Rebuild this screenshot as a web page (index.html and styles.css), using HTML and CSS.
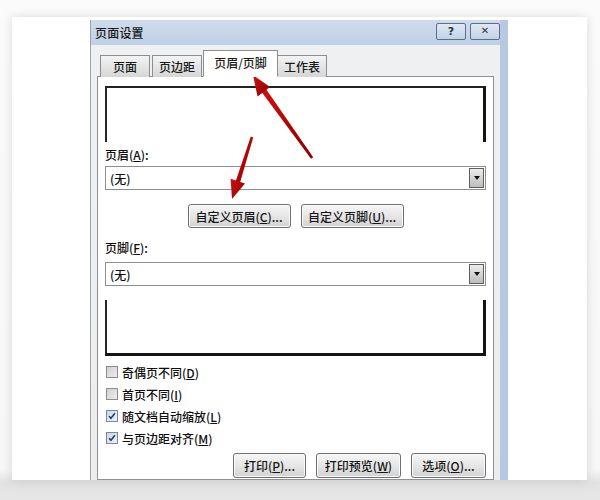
FILE: index.html
```html
<!DOCTYPE html>
<html lang="zh-CN">
<head>
<meta charset="utf-8">
<title>页面设置</title>
<link rel="stylesheet" href="styles.css">
</head>
<body>
<div class="page">
  <div class="card">
    <div class="dialog">
      <div class="titlebar">
        <span class="title">页面设置</span>
        <div class="tbtns">
          <span class="tbtn">?</span>
          <span class="tbtn close">✕</span>
        </div>
      </div>
      <div class="frame">
        <div class="tabs">
          <span class="tab t1">页面</span>
          <span class="tab t2">页边距</span>
          <span class="tab active">页眉/页脚</span>
          <span class="tab t4">工作表</span>
        </div>
        <div class="panel">
          <div class="preview top"></div>
          <div class="label l1">页眉(<u>A</u>):</div>
          <div class="select s1"><span class="val">(无)</span><span class="drop"><span class="tri"></span></span></div>
          <div class="btnrow">
            <span class="btn wide"><span>自定义页眉(<u>C</u>)...</span></span>
            <span class="btn wide"><span>自定义页脚(<u>U</u>)...</span></span>
          </div>
          <div class="label l2">页脚(<u>F</u>):</div>
          <div class="select s2"><span class="val">(无)</span><span class="drop"><span class="tri"></span></span></div>
          <div class="preview bottom"></div>
          <div class="checks">
            <label class="check"><span class="box"></span><span class="ct">奇偶页不同(<u>D</u>)</span></label>
            <label class="check"><span class="box"></span><span class="ct">首页不同(<u>I</u>)</span></label>
            <label class="check"><span class="box on"><svg viewBox="0 0 12 12" width="12" height="12"><path d="M2.5 6.2 L4.8 8.8 L9.5 2.8" fill="none" stroke="#1d3a6e" stroke-width="1.8"/></svg></span><span class="ct">随文档自动缩放(<u>L</u>)</span></label>
            <label class="check"><span class="box on"><svg viewBox="0 0 12 12" width="12" height="12"><path d="M2.5 6.2 L4.8 8.8 L9.5 2.8" fill="none" stroke="#1d3a6e" stroke-width="1.8"/></svg></span><span class="ct">与页边距对齐(<u>M</u>)</span></label>
          </div>
          <div class="footbtns">
            <span class="btn b1"><span>打印(<u>P</u>)...</span></span>
            <span class="btn b2"><span>打印预览(<u>W</u>)</span></span>
            <span class="btn b3"><span>选项(<u>O</u>)...</span></span>
          </div>
        </div>
      </div>
    </div>
  </div>
  <svg class="arrows" width="600" height="500" viewBox="0 0 600 500">
    <defs>
      <linearGradient id="ag" x1="0" y1="0" x2="1" y2="1">
        <stop offset="0" stop-color="#d01010"/>
        <stop offset="1" stop-color="#8a0000"/>
      </linearGradient>
    </defs>
    <polygon points="313.2,157.2 311,158.8 261.8,92.2 266,89" fill="url(#ag)"/>
    <polygon points="253,75 270,87 257.5,96.5" fill="url(#ag)"/>
    <polygon points="253.2,137.4 250.8,136.6 235.6,181.4 240,182.8" fill="url(#ag)"/>
    <polygon points="232,199 245,183.5 230.6,178.8" fill="url(#ag)"/>
  </svg>
</div>
</body>
</html>
```

FILE: styles.css
```css
html, body {
  margin: 0;
  padding: 0;
}
body {
  width: 600px;
  height: 500px;
  overflow: hidden;
  background: linear-gradient(180deg, #fbfbfb 0, #f7f7f7 470px, #e2e2e2 482px, #e6e6e6 500px);
  font-family: "Noto Sans CJK SC", "Noto Sans", sans-serif;
  font-size: 12px;
  font-weight: 500;
  color: #0d0d0d;
}
.page {
  position: relative;
  width: 600px;
  height: 500px;
  padding-top: 17px;
  box-sizing: border-box;
}
.card {
  margin-left: 12px;
  width: 575px;
  height: 463px;
  background: #ffffff;
  box-shadow: 0 0 10px rgba(0, 0, 0, 0.13);
  padding: 3px 0 0 78px;
  box-sizing: border-box;
}
.dialog {
  width: 418px;
  height: 460px;
  overflow: hidden;
  border-left: 1px solid #9da3ab;
  border-right: 8px solid #b7c8e0;
  box-sizing: border-box;
  display: flex;
  flex-direction: column;
  background: #ebebeb;
}
.titlebar {
  height: 25px;
  flex: none;
  display: flex;
  align-items: center;
  justify-content: space-between;
  background: linear-gradient(180deg, #cfdcec, #bfcfe4);
  padding-left: 4px;
  margin-right: -8px;
}
.title {
  font-size: 12px;
  color: #1b1b1b;
  letter-spacing: 0.2px;
}
.tbtns {
  display: flex;
  gap: 4px;
  margin-right: 8px;
  margin-top: -3px;
}
.tbtn {
  width: 28px;
  height: 15px;
  border: 1px solid #5d6f88;
  border-radius: 2px;
  background: linear-gradient(180deg, #dfe8f3, #c3d2e5);
  display: flex;
  align-items: center;
  justify-content: center;
  font-family: "DejaVu Sans", sans-serif;
  font-size: 11px;
  font-weight: bold;
  color: #2b3440;
  line-height: 1;
}
.tbtn.close {
  font-size: 10px;
}
.frame {
  flex: 1;
  display: flex;
  flex-direction: column;
  padding: 5px 6px 0 6px;
  background: linear-gradient(180deg, #eef0f2, #ededed);
}
.tabs {
  display: flex;
  align-items: flex-end;
  height: 27px;
  padding-left: 3px;
  margin-bottom: -1px;
  position: relative;
  z-index: 1;
}
.tab {
  height: 22px;
  box-sizing: border-box;
  border: 1px solid #8b8d90;
  border-bottom: none;
  background: linear-gradient(180deg, #f4f4f4, #d6d6d6);
  display: flex;
  align-items: center;
  justify-content: center;
  font-size: 12px;
  color: #1a1a1a;
}
.t1 { width: 50px; margin-right: 2px; }
.t2 { width: 50px; margin-right: 1px; }
.tab.active {
  width: 75px;
  height: 27px;
  background: #ffffff;
  border-bottom: 1px solid #ffffff;
  padding-bottom: 3px;
}
.t4 { width: 49px; border-left: none; }
.panel {
  flex: 1;
  background: #ffffff;
  border: 1px solid #8d9096;
  padding: 0 7px;
  display: flex;
  flex-direction: column;
}
.preview {
  height: 56px;
  flex: none;
  box-sizing: border-box;
  border-left: 2px solid #262626;
  border-right: 3px solid #151515;
}
.preview.top {
  margin-top: 9px;
  border-top: 2px solid #222;
}
.preview.bottom {
  margin-top: 14px;
  border-bottom: 3px solid #151515;
}
.label {
  height: 16px;
  line-height: 16px;
}
.l1 { margin-top: 5px; }
.l2 { margin-top: 12px; }
.select {
  height: 24px;
  flex: none;
  box-sizing: border-box;
  border: 1px solid #8e8e8e;
  display: flex;
  align-items: center;
  justify-content: space-between;
  margin-top: 3px;
}
.s2 { margin-top: 6px; }
.val {
  padding-left: 4px;
}
.drop {
  width: 15px;
  height: 20px;
  margin-right: 1px;
  box-sizing: border-box;
  border: 1px solid #5e5e5e;
  background: linear-gradient(180deg, #ececec, #bdbdbd);
  display: flex;
  align-items: center;
  justify-content: center;
}
.tri {
  width: 0;
  height: 0;
  border-left: 3.5px solid transparent;
  border-right: 3.5px solid transparent;
  border-top: 4px solid #111;
}
.btnrow {
  display: flex;
  justify-content: center;
  gap: 10px;
  margin-top: 14px;
}
.btn {
  height: 24px;
  box-sizing: border-box;
  border: 1px solid #6f6f6f;
  border-radius: 3px;
  background: linear-gradient(180deg, #f6f6f6 0, #e6e6e6 50%, #d2d2d2 100%);
  display: flex;
  align-items: center;
  justify-content: center;
  font-size: 12px;
  color: #151515;
  box-shadow: inset 0 0 0 1px #fbfbfb;
}
.btn.wide { width: 103px; }
.checks {
  display: flex;
  flex-direction: column;
  margin-top: 5px;
}
.check {
  height: 22px;
  display: flex;
  align-items: center;
  gap: 4px;
  padding-left: 1px;
}
.box {
  width: 12px;
  height: 12px;
  box-sizing: border-box;
  border: 1px solid #8c8c8c;
  background: linear-gradient(135deg, #cfcfcf, #eeeeee);
  display: flex;
  align-items: center;
  justify-content: center;
}
.box.on {
  background: linear-gradient(135deg, #c9d6e6, #eef2f7);
  border-color: #7d8796;
}
.box svg {
  display: block;
}
.footbtns {
  display: flex;
  justify-content: flex-end;
  gap: 10px;
  margin-top: 4px;
}
.footbtns .btn { height: 25px; }
.b1 { width: 73px; }
.b2 { width: 85px; }
.b3 { width: 75px; }
.arrows {
  position: absolute;
  left: 0;
  top: 0;
  pointer-events: none;
}
```
